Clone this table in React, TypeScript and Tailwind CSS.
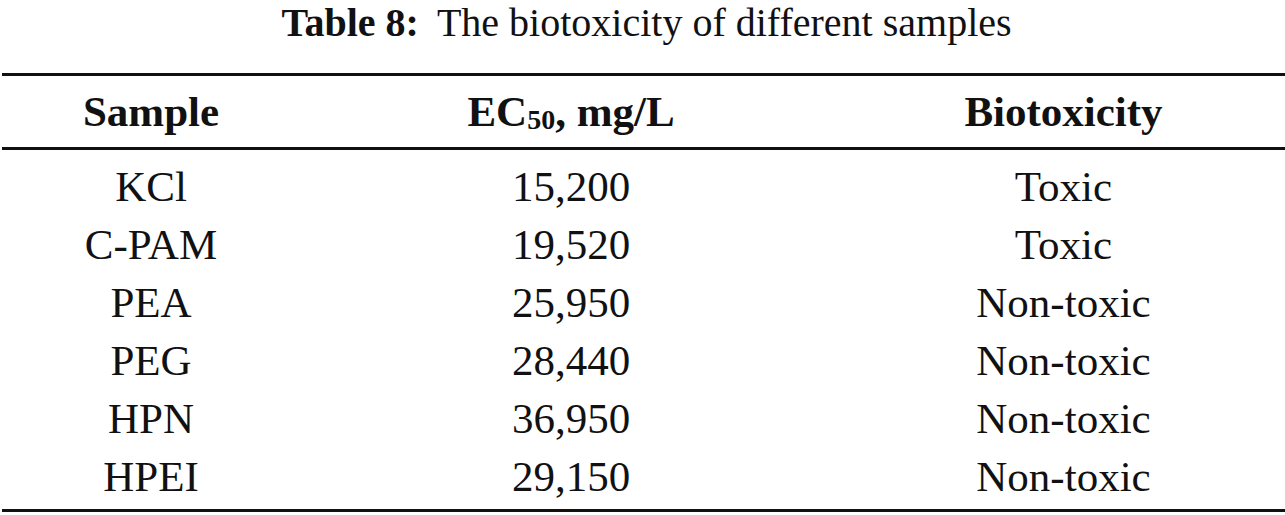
const rows = [
  { sample: "KCl", ec50: "15,200", tox: "Toxic" },
  { sample: "C-PAM", ec50: "19,520", tox: "Toxic" },
  { sample: "PEA", ec50: "25,950", tox: "Non-toxic" },
  { sample: "PEG", ec50: "28,440", tox: "Non-toxic" },
  { sample: "HPN", ec50: "36,950", tox: "Non-toxic" },
  { sample: "HPEI", ec50: "29,150", tox: "Non-toxic" },
];

export default function App() {
  return (
    <div className="h-[515px] w-[1285px] overflow-hidden bg-white font-['Liberation_Serif',serif] text-[#111]">
      <div className="pl-[8px] pt-[2px] text-center text-[40px] leading-[41px]">
        <span className="font-bold">Table 8:</span>
        <span className="ml-[18px]">The biotoxicity of different samples</span>
      </div>

      <div className="mt-[30px] pl-[2px]">
        <div className="h-[3px] bg-[#111]" />
        <div className="grid h-[71px] grid-cols-[298px_542px_1fr] text-center text-[43px] font-bold leading-[71px]">
          <div>Sample</div>
          <div>
            EC<sub className="relative bottom-[-3px] align-baseline text-[28px]">50</sub>, mg/L
          </div>
          <div>Biotoxicity</div>
        </div>
        <div className="h-[3px] bg-[#111]" />

        <div className="pb-[3px] pt-[8px]">
          {rows.map((r) => (
            <div
              key={r.sample}
              className="grid h-[58px] grid-cols-[298px_542px_1fr] text-center text-[43px] leading-[58px]"
            >
              <div>{r.sample}</div>
              <div>{r.ec50}</div>
              <div>{r.tox}</div>
            </div>
          ))}
        </div>
        <div className="h-[3px] bg-[#111]" />
      </div>
    </div>
  );
}
